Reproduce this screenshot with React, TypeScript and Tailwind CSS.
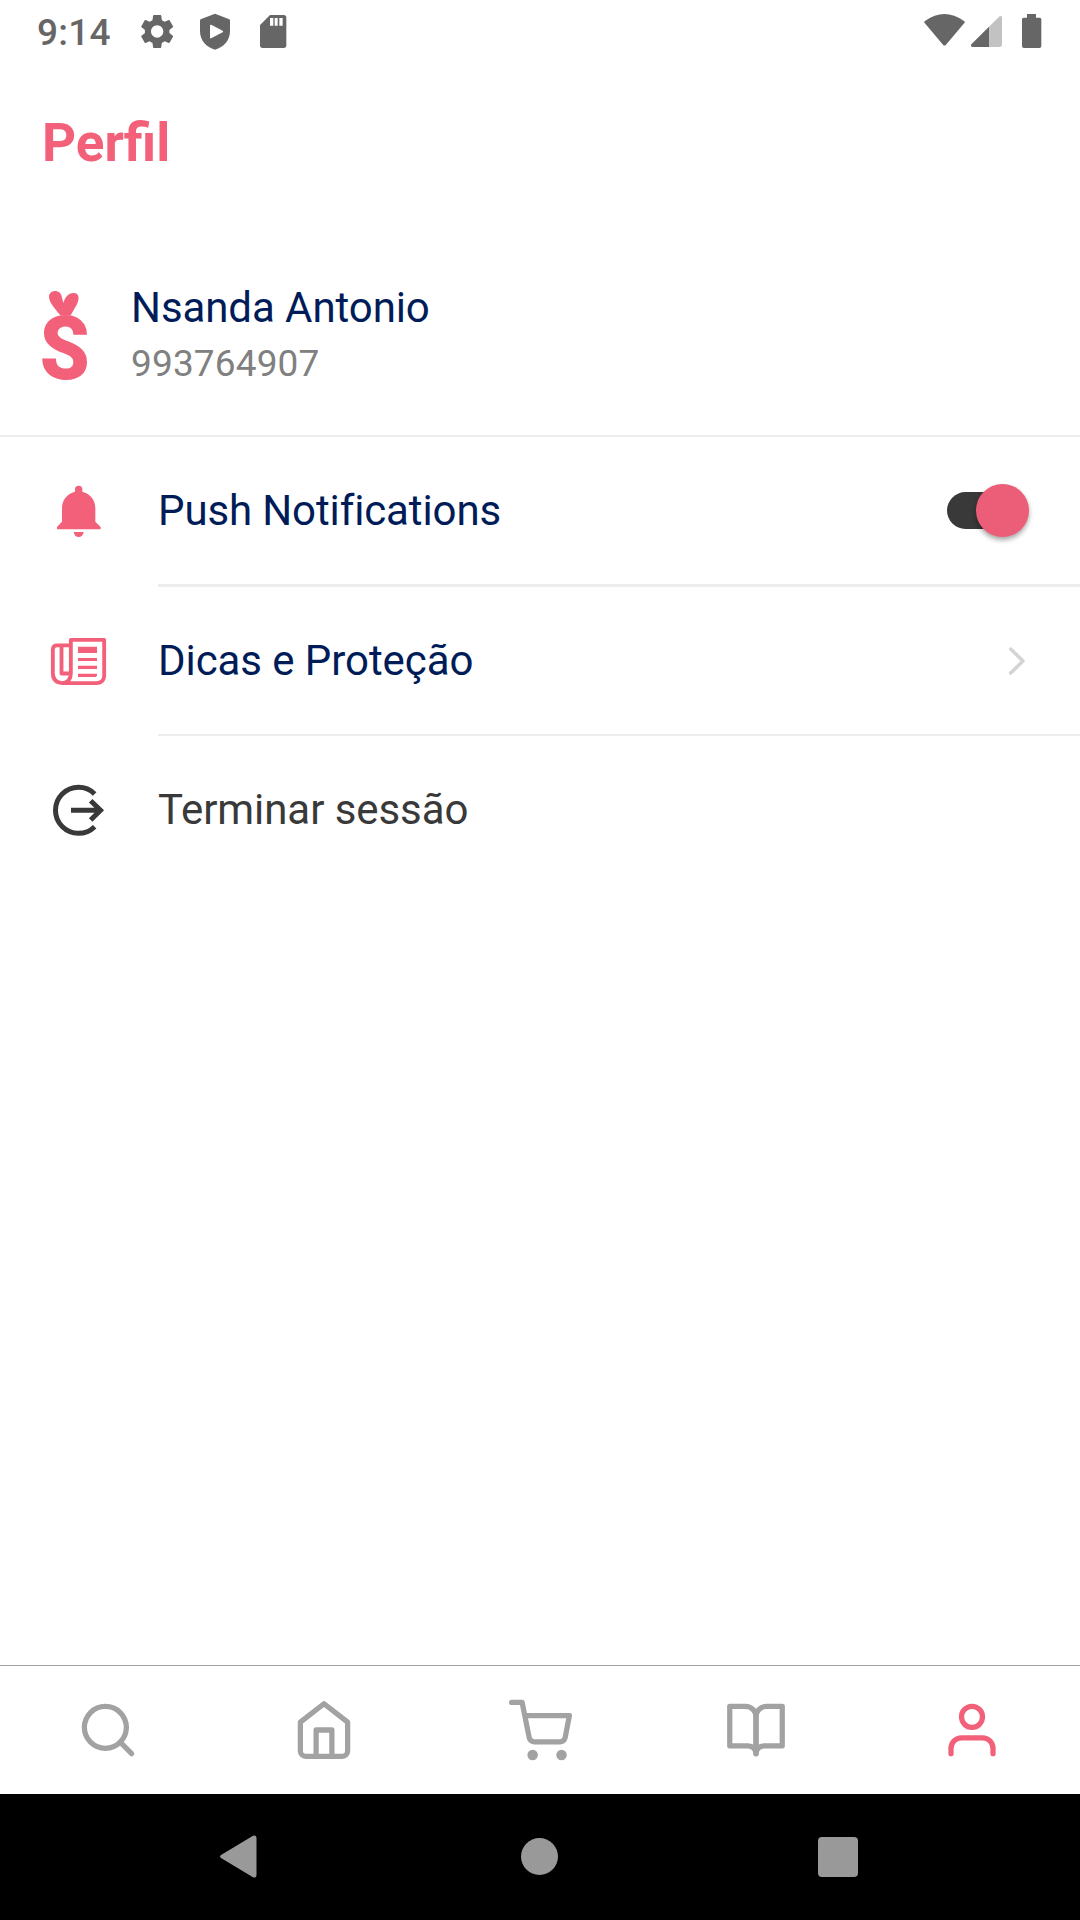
import type { ReactNode } from "react";

function Glyph({ box, className, children }: { box: string; className: string; children: ReactNode }) {
  return (
    <svg viewBox={box} className={className} fill="currentColor" aria-hidden="true">
      {children}
    </svg>
  );
}

function StatusBar() {
  return (
    <header className="flex h-[63px] items-start justify-between text-[#666666]">
      <div className="flex items-start">
        <span className="ml-[37px] w-[100px] text-[37px] font-[470] leading-[66px] tracking-[0.25px]">9:14</span>
        <Glyph box="0.2 0 24 24" className="mt-[11px] h-[41px] w-[41px]">
          <path d="M19.14 12.94c.04-.3.06-.61.06-.94 0-.32-.02-.64-.07-.94l2.03-1.58a.49.49 0 0 0 .12-.61l-1.92-3.32a.488.488 0 0 0-.59-.22l-2.39.96c-.5-.38-1.03-.7-1.62-.94l-.36-2.54a.484.484 0 0 0-.48-.41h-3.84c-.24 0-.43.17-.47.41l-.36 2.54c-.59.24-1.13.57-1.62.94l-2.39-.96c-.22-.08-.47 0-.59.22L2.74 8.87c-.12.21-.08.47.12.61l2.03 1.58c-.05.3-.09.63-.09.94s.02.64.07.94l-2.03 1.58a.49.49 0 0 0-.12.61l1.92 3.32c.12.22.37.29.59.22l2.39-.96c.5.38 1.03.7 1.62.94l.36 2.54c.05.24.24.41.48.41h3.84c.24 0 .44-.17.47-.41l.36-2.54c.59-.24 1.13-.56 1.62-.94l2.39.96c.22.08.47 0 .59-.22l1.92-3.32c.12-.22.07-.47-.12-.61l-2.01-1.58zM12 15.6c-1.98 0-3.6-1.62-3.6-3.6s1.62-3.6 3.6-3.6 3.6 1.62 3.6 3.6-1.62 3.6-3.6 3.6z" />
        </Glyph>
        <Glyph box="600 39 90 114" className="ml-[22px] mt-[13px] h-[38px] w-[30px]">
          <path
            fillRule="evenodd"
            d="M645 41L688 58Q690 59 690 62V93C690 121 671 142 645 149C619 142 600 121 600 93V62Q600 59 602 58ZM630 77V112Q630 117 635 114L668 97Q671 95 668 92L635 75Q630 73 630 77Z"
          />
        </Glyph>
        <Glyph box="780 45 81 99" className="ml-[30px] mt-[15px] h-[33px] w-[27px]">
          <path
            fillRule="evenodd"
            d="M810 45H851Q859 45 859 53V136Q859 144 851 144H788Q780 144 780 136V75ZM810 54V77H820V54ZM824 54V77H833V54ZM838 54V77H848V54Z"
          />
        </Glyph>
      </div>
      <div className="flex">
        <Glyph box="72 42 123 102" className="mt-[14px] h-[34px] w-[41px]">
          <path d="M74 69Q71 66 75 63Q133 21 192 63Q196 66 193 69L138 134Q133 139 129 134Z" />
        </Glyph>
        <Glyph box="213 48 93 93" className="ml-[6px] mt-[16px] h-[31px] w-[31px]">
          <path d="M267 80L299 49Q306 46 306 54V134Q306 141 299 141H267Z" opacity=".4" />
          <path d="M267 80V141H217Q211 139 214 133Z" />
        </Glyph>
        <Glyph box="366 42 60 102" className="ml-[20px] mr-[38px] mt-[14px] h-[34px] w-[20px]">
          <path d="M381 42H408V53H419Q424 53 424 58V138Q424 144 418 144H372Q366 144 366 138V58Q366 53 371 53H381Z" />
        </Glyph>
      </div>
    </header>
  );
}

function BrandMark() {
  return (
    <Glyph box="57 -6 153 405" className="h-[135px] w-[51px] text-[#f2607a]">
      <path d="M121 136C104 115 87 96 87 80C87 61 117 56 124 76L130 99C135 83 144 69 161 69C176 69 180 83 171 103L152 136Z" />
      <text transform="translate(59.5 327) scale(0.9 1)" className="text-[266px] font-black">
        S
      </text>
    </Glyph>
  );
}

function BellIcon() {
  return (
    <Glyph box="66 72 159 159" className="h-[53px] w-[53px] text-[#f2607a]">
      <path d="M135 88a11 11 0 0 1 22 0v7C181 101 196 121 196 144V185L212 201V208H81V201L96 185V144C96 121 111 101 135 95Z" />
      <path d="M131 216H161Q158 231 146 231Q134 231 131 216Z" />
    </Glyph>
  );
}

function NewsIcon() {
  return (
    <Glyph box="60 75 171 153" className="h-[51px] w-[57px] text-[#f2607a]">
      <g fill="none" stroke="currentColor" strokeWidth="11.500" strokeLinejoin="round">
        <path d="M97 219.500H200Q222.500 217 222.500 197V89.500H122.500V190Q122.500 217 97 219.500Q68.500 217 68.500 190V118Q69 106 81 106H122" />
        <path d="M94.500 108V190.500H118" />
      </g>
      <path d="M144 110H201V129H144ZM144 144H201V153H144ZM144 167H201V177H144ZM144 191H201V197L197 201H144Z" />
    </Glyph>
  );
}

function LogoutIcon() {
  return (
    <Glyph box="66 519 159 159" className="h-[53px] w-[53px] text-[#393939]">
      <g fill="none" stroke="currentColor" strokeWidth="15">
        <path d="M194 552A69 69 0 1 0 194 650" />
        <path d="M123 601H211M182 572L211.500 601L182 630" />
      </g>
    </Glyph>
  );
}

function Row({
  icon,
  label,
  trailing,
  className,
}: {
  icon: ReactNode;
  label: string;
  trailing?: ReactNode;
  className: string;
}) {
  return (
    <li className="flex items-start">
      <div className="flex h-[147px] w-[158px] shrink-0 items-center justify-center pr-[1px]">{icon}</div>
      <div
        className={`box-content flex h-[147px] flex-1 items-center justify-between border-[#ededed] text-[42px] ${className}`}
      >
        <span>{label}</span>
        {trailing}
      </div>
    </li>
  );
}

function Toggle() {
  return (
    <div
      role="switch"
      aria-checked="true"
      className="mr-[51px] flex h-[37px] w-[82.5px] items-center justify-end rounded-full bg-linear-to-r from-[#393939] from-60% to-transparent to-60%"
    >
      <span className="h-[53px] w-[53px] shrink-0 rounded-full bg-[#ec5e78] shadow-[0_3px_5px_rgba(0,0,0,0.35)]" />
    </div>
  );
}

function Settings() {
  return (
    <ul>
      <Row
        icon={<BellIcon />}
        label="Push Notifications"
        trailing={<Toggle />}
        className="border-b-3 tracking-[-0.12px] text-[#001c58]"
      />
      <Row
        icon={<NewsIcon />}
        label="Dicas e Proteção"
        className="border-b-2 tracking-[-0.07px] text-[#001c58]"
        trailing={
          <Glyph box="264 559 54 90" className="mr-[54px] h-[30px] w-[18px] text-[#d4d4d4]">
            <path
              d="M272 568L309 604L272 640"
              fill="none"
              stroke="currentColor"
              strokeWidth="10.500"
              strokeLinecap="round"
              strokeLinejoin="round"
            />
          </Glyph>
        }
      />
      <Row icon={<LogoutIcon />} label="Terminar sessão" className="tracking-[-0.07px] text-[#393939]" />
    </ul>
  );
}

function Tab({ active, children }: { active?: boolean; children: ReactNode }) {
  return (
    <button className={`flex flex-1 items-center justify-center ${active ? "text-[#f2607a]" : "text-[#a2a2a2]"}`}>
      <svg
        viewBox="-0.190 -0.190 24.380 24.380"
        className="h-[64px] w-[64px]"
        fill="none"
        stroke="currentColor"
        strokeWidth="2"
        strokeLinecap="round"
        strokeLinejoin="round"
      >
        {children}
      </svg>
    </button>
  );
}

function TabBar() {
  return (
    <nav className="flex h-[129px] border-t border-[#a2a2a2]">
      <Tab>
        <circle cx="11" cy="11" r="8" />
        <path d="M21 21l-4.350-4.350" />
      </Tab>
      <Tab>
        <path d="M3 9l9-7 9 7v11a2 2 0 0 1-2 2H5a2 2 0 0 1-2-2z" />
        <path d="M9 22V12h6v10" />
      </Tab>
      <Tab>
        <g transform="translate(0.2 0.5)">
          <circle cx="9" cy="21" r="1" />
          <circle cx="20" cy="21" r="1" />
          <path d="M1 1h4l2.680 13.390a2 2 0 0 0 2 1.610h9.720a2 2 0 0 0 2-1.610L23 6H6" />
        </g>
      </Tab>
      <Tab>
        <path d="M2 3h6a4 4 0 0 1 4 4v14a3 3 0 0 0-3-3H2z" />
        <path d="M22 3h-6a4 4 0 0 0-4 4v14a3 3 0 0 1 3-3h7z" />
      </Tab>
      <Tab active>
        <path d="M20 21v-2a4 4 0 0 0-4-4H8a4 4 0 0 0-4 4v2" />
        <circle cx="12" cy="7" r="4" />
      </Tab>
    </nav>
  );
}

function SystemNav() {
  return (
    <footer className="flex h-[126px] items-center bg-black pb-px pl-[220px] text-[#999999]">
      <Glyph box="0 0 37 43" className="h-[43px] w-[37px]">
        <path d="M1 20L33 .8Q36.500-.6 36.500 3V40Q36.500 43.600 33 42.200L1 23Q-.8 21.500 1 20Z" />
      </Glyph>
      <span className="ml-[264px] h-[37px] w-[37px] rounded-full bg-[#999999]" />
      <span className="ml-[260px] h-[40px] w-[40px] rounded-[4px] bg-[#999999]" />
    </footer>
  );
}

export default function App() {
  return (
    <div className="flex h-[1920px] w-[1080px] flex-col overflow-hidden bg-white font-['Roboto',sans-serif]">
      <StatusBar />
      <h1 className="h-[173px] pl-[42px] pt-[50px] text-[53px] font-bold leading-[60px] text-[#f2607a]">Perfil</h1>
      <section className="flex h-[201px] items-center border-b-2 border-[#ededed] pl-[39px]">
        <BrandMark />
        <div className="ml-[41px] leading-[56px]">
          <p className="text-[42px] tracking-[-0.08px] text-[#001c58]">Nsanda Antonio</p>
          <p className="text-[37px] tracking-[0.15px] text-[#808080]">993764907</p>
        </div>
      </section>
      <main className="flex-1">
        <Settings />
      </main>
      <TabBar />
      <SystemNav />
    </div>
  );
}
